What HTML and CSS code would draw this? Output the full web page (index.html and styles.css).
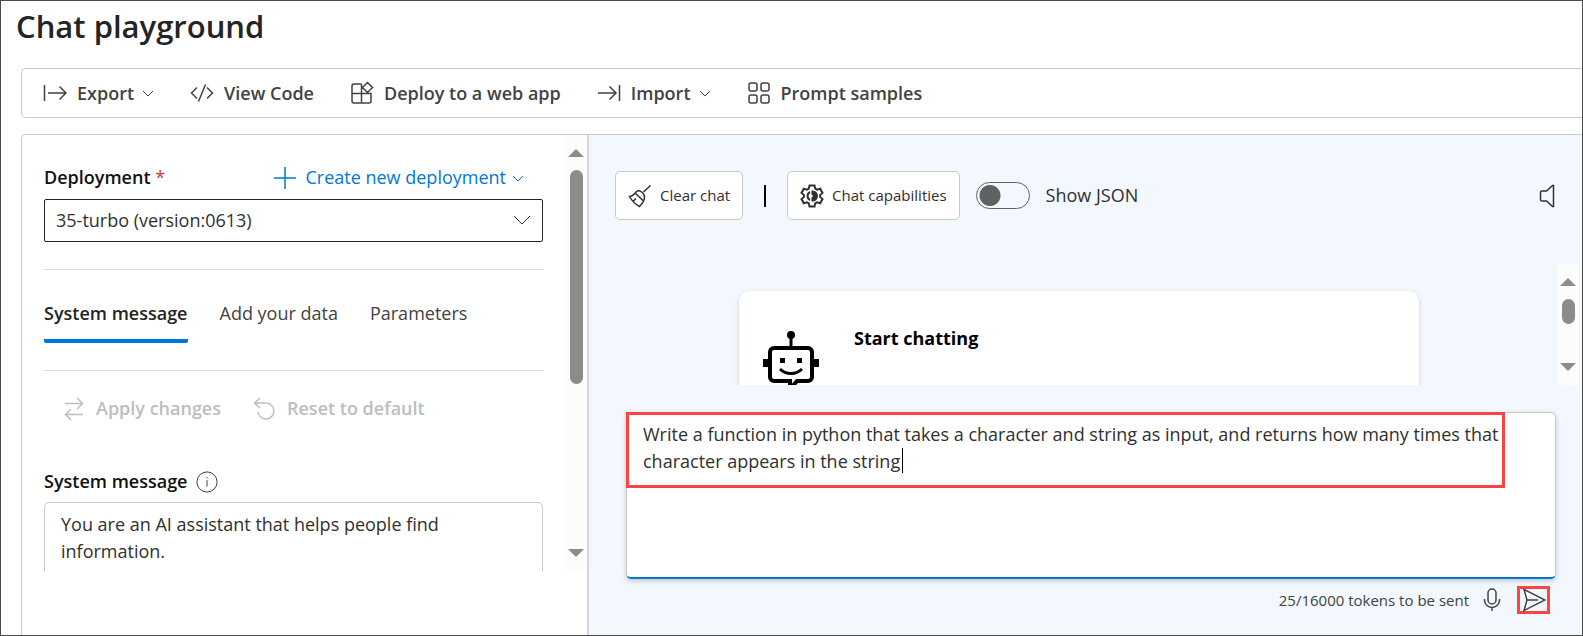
FILE: index.html
```html
<!DOCTYPE html>
<html lang="en">
<head>
<meta charset="utf-8">
<title>Chat playground</title>
<link rel="stylesheet" href="styles.css">
</head>
<body>
<div class="page">
  <h1 class="title">Chat playground</h1>

  <nav class="toolbar" aria-label="Playground actions">
    <button class="tool" type="button">
      <svg class="icon" viewBox="0 0 24 24"><path d="M1.500 4v16M5 12h18M16.500 5.500 23 12l-6.500 6.500"/></svg>
      <span>Export</span>
      <svg class="chevron" viewBox="0 0 12 12"><path d="M1 4l5 5 5-5"/></svg>
    </button>
    <button class="tool" type="button">
      <svg class="icon" viewBox="0 0 24 24"><path d="M7 6.500 1.500 12 7 17.500M17 6.500l5.500 5.500-5.500 5.500M15.500 3.500l-7 17"/></svg>
      <span>View Code</span>
    </button>
    <button class="tool" type="button">
      <svg class="icon" viewBox="0 0 24 24"><path d="M11.500 3H4a2 2 0 0 0-2 2v15a2 2 0 0 0 2 2h15a2 2 0 0 0 2-2v-7.500H2M11.500 3v19M17.500 1.500l5 5-5 5-5-5z"/></svg>
      <span>Deploy to a web app</span>
    </button>
    <button class="tool" type="button">
      <svg class="icon" viewBox="0 0 24 24"><path d="M22.500 4v16M1 12h18M12.500 5.500 19 12l-6.500 6.500"/></svg>
      <span>Import</span>
      <svg class="chevron" viewBox="0 0 12 12"><path d="M1 4l5 5 5-5"/></svg>
    </button>
    <button class="tool" type="button">
      <svg class="icon" viewBox="0 0 24 24"><rect x="2" y="2" width="8" height="8" rx="2"/><rect x="14" y="2" width="8" height="8" rx="2"/><rect x="2" y="14" width="8" height="8" rx="2"/><rect x="14" y="14" width="8" height="8" rx="2"/></svg>
      <span>Prompt samples</span>
    </button>
  </nav>

  <main class="workspace">
    <section class="setup">
      <div class="setup-scroll">
        <div class="setup-content">
          <div class="field-head">
            <label class="label" for="deployment">Deployment <span class="required">*</span></label>
            <button class="create" type="button">
              <svg class="icon" viewBox="0 0 24 24"><path d="M12 1v22M1 12h22"/></svg>
              <span>Create new deployment</span>
              <svg class="chevron" viewBox="0 0 12 12"><path d="M1 4l5 5 5-5"/></svg>
            </button>
          </div>
          <div class="select-wrap">
            <select id="deployment" class="select"><option>35-turbo (version:0613)</option></select>
            <svg class="select-arrow" viewBox="0 0 18 18"><path d="M1 5l8 8 8-8"/></svg>
          </div>
          <div class="tabs" role="tablist">
            <button class="tab tab-active" type="button" role="tab" aria-selected="true">System message</button>
            <button class="tab" type="button" role="tab">Add your data</button>
            <button class="tab" type="button" role="tab">Parameters</button>
          </div>
          <div class="actions">
            <button class="action" type="button" disabled>
              <svg class="icon" viewBox="0 0 24 24"><path d="M3 6.500h17M15 1l5.500 5.500L15 12M21 17.500H4M9 12l-5.500 5.500L9 23"/></svg>
              <span>Apply changes</span>
            </button>
            <button class="action" type="button" disabled>
              <svg class="icon" viewBox="0 0 24 24"><path d="M7 1 1.500 6 7 11M2 6h11a8 8 0 1 1-8 9"/></svg>
              <span>Reset to default</span>
            </button>
          </div>
          <div class="message-head">
            <label class="label" for="system-message">System message</label>
            <svg class="info" viewBox="0 0 24 24"><circle cx="12" cy="12" r="11"/><path d="M12 10v7M12 6.500v1.500"/></svg>
          </div>
          <textarea id="system-message" class="message">You are an AI assistant that helps people find information.</textarea>
        </div>
        <div class="scrollbar">
          <i class="arrow-up"></i><i class="thumb"></i><i class="arrow-down"></i>
        </div>
      </div>
    </section>

    <section class="chat">
      <div class="chat-bar">
        <button class="chip" type="button">
          <svg class="icon" viewBox="0 0 24 24"><path d="M22.500 1.500 15.500 8M8.500 7.500c3-2 8 1.500 8 5.500 0 4-2.500 7-5 9.500C7 20 4 17 1.500 12.500c3 0 5-2.500 7-5zM7 9l8.500 8M5 17.500l3-3"/></svg>
          <span>Clear chat</span>
        </button>
        <span class="bar-divider"></span>
        <button class="chip" type="button">
          <svg class="icon gear" viewBox="0 0 24 24"><path d="M9.500 1.500h5l.7 3.200 1.800 1 3.200-1 2.300 4.200-2.400 2.200v1.800l2.400 2.200-2.300 4.200-3.200-1-1.800 1-.7 3.200h-5l-.7-3.200-1.800-1-3.200 1-2.300-4.200 2.400-2.200v-1.800L1.500 8.900l2.300-4.200 3.200 1 1.800-1z"/><path d="M10 8a4.500 4.500 0 0 0 0 8"/><path d="M12.500 7.500a4.500 4.500 0 0 1 0 9V14l2-2-2-2z" fill="currentColor"/></svg>
          <span>Chat capabilities</span>
        </button>
        <label class="switch"><input class="switch-input" type="checkbox" role="switch"><span>Show JSON</span></label>
        <button class="speaker" type="button" aria-label="Speaker">
          <svg class="icon" viewBox="0 0 24 24"><path d="M17.500 1.500v21h-1L10.500 17H6a1.500 1.500 0 0 1-1.500-1.500v-7A1.500 1.500 0 0 1 6 7h4.500l6-5.500z"/></svg>
        </button>
      </div>

      <div class="thread">
        <div class="thread-body">
          <article class="card">
            <svg class="robot" viewBox="0 0 56 60"><g fill="none" stroke="#000" stroke-width="4"><path d="M28 5v12" stroke-width="3"/><path d="M11 17h34a4 4 0 0 1 4 4v25a4 4 0 0 1-4 4H34l-7 8v-8H11a4 4 0 0 1-4-4V21a4 4 0 0 1 4-4z"/><path d="M17 38c6 6 16 6 22 0" stroke-width="3"/></g><circle cx="28" cy="4" r="4"/><path d="M0 28h5v8H0zM51 28h5v8h-5zM17 27h5v5h-5zM34 27h5v5h-5z"/></svg>
            <h2 class="card-title">Start chatting</h2>
          </article>
        </div>
        <div class="scrollbar">
          <i class="arrow-up"></i><i class="thumb thumb-short"></i><i class="arrow-down"></i>
        </div>
      </div>

      <div class="composer">
        <textarea class="prompt" aria-label="User message">Write a function in python that takes a character and string as input, and returns how many times that character appears in the string</textarea>
        <span class="caret"></span>
        <span class="highlight"></span>
      </div>
      <div class="composer-foot">
        <span class="tokens">25/16000 tokens to be sent</span>
        <button class="mic" type="button" aria-label="Speak">
          <svg class="icon" viewBox="0 0 24 24"><rect x="8" y="1" width="8" height="15" rx="4"/><path d="M4.500 11v1a7.500 7.500 0 0 0 15 0v-1M12 19.500V23"/></svg>
        </button>
        <button class="send" type="button" aria-label="Send">
          <svg class="icon" viewBox="0 0 24 24"><path d="M2 1.500 23 12 2 22.500 5 12zM5 12h11"/></svg>
        </button>
      </div>
    </section>
  </main>
</div>
</body>
</html>
```
FILE: styles.css
```css
* { box-sizing: border-box; }
html, body { height: 100%; }
body {
  margin: 0;
  font: 18px/27px "Open Sans", "Segoe UI", sans-serif;
  color: #303030;
  background: #fff;
}
button, select, textarea { font: inherit; color: inherit; margin: 0; }
button { display: flex; align-items: center; padding: 0; border: 0; background: none; white-space: nowrap; }
svg { display: block; flex: none; fill: none; stroke: currentColor; stroke-width: 1.5; }
.icon { width: 24px; height: 24px; }
.chevron { width: 12px; height: 12px; margin-left: -2px; stroke-width: 1; }

.page {
  min-height: 100%;
  display: flex;
  flex-direction: column;
  border: 1px solid #4d4a4c;
  overflow: hidden;
}
.title { margin: 0; padding: 4px 0 0 15px; font-size: 31px; line-height: 42px; font-weight: 600; color: #242424; }

.toolbar {
  display: flex;
  align-items: center;
  gap: 36px;
  height: 50px;
  margin: 21px 0 16px 20px;
  padding-left: 21px;
  border: 1px solid #c9c9c9;
  border-right: 0;
  border-radius: 5px 0 0 5px;
  color: #424242;
}
.tool { gap: 10px; font-weight: 600; }

.workspace {
  flex: 1;
  display: flex;
  margin-left: 20px;
  border: 1px solid #c9c9c9;
  border-width: 1px 0 0 1px;
  border-radius: 5px 0 0 0;
}
.setup { flex: none; width: 567px; border-right: 2px solid #d4d6d9; }
.setup-scroll { display: flex; height: 436px; overflow: hidden; }
.setup-content { flex: 1; min-width: 0; padding: 29px 22px 0; }
.scrollbar {
  flex: none;
  width: 22px;
  display: flex;
  flex-direction: column;
  align-items: center;
  padding: 14px 0;
  background: #fcfcfc;
}
.arrow-up, .arrow-down { border: solid transparent; border-width: 0 8px; }
.arrow-up { border-bottom: 8px solid #8b8b8b; }
.arrow-down { border-top: 8px solid #8b8b8b; margin-top: auto; }
.thumb { width: 13px; height: 214px; margin-top: 13px; border-radius: 7px; background: #8b8b8b; }
.thumb-short { height: 25px; }

.field-head { display: flex; justify-content: space-between; padding-right: 19px; }
.label { font-weight: 600; color: #111; }
.required { color: #d13438; font-weight: 400; }
.create { gap: 8px; color: #0078d4; }
.select-wrap { position: relative; margin-top: 8px; }
.select {
  display: block;
  width: 100%;
  height: 43px;
  padding: 0 11px;
  border: 1px solid #242424;
  border-radius: 2px;
  background: #fff;
  appearance: none;
}
.select-arrow { position: absolute; right: 12px; top: 12px; width: 18px; height: 18px; stroke-width: 1; pointer-events: none; }
.tabs {
  display: flex;
  gap: 32px;
  margin-top: 27px;
  padding: 30px 0 27px;
  border: solid #dcdcdc;
  border-width: 1px 0;
}
.tab { padding-bottom: 12px; border-bottom: 4px solid transparent; color: #424242; }
.tab-active { font-weight: 600; color: #242424; border-bottom-color: #0078d4; border-radius: 2px; }
.actions { display: flex; gap: 32px; margin-top: 24px; padding-left: 18px; }
.action { gap: 10px; font-weight: 600; color: #bdbdbd; }
.message-head { display: flex; align-items: center; gap: 8px; margin-top: 46px; }
.info { width: 22px; height: 22px; stroke-width: 1; }
.message {
  display: block;
  width: 100%;
  height: 120px;
  margin-top: 7px;
  padding: 8px 16px;
  border: 1px solid #c9c9c9;
  border-radius: 5px;
  resize: none;
}

.chat { flex: 1; min-width: 0; background: #f3f7fe; }
.chat-bar { display: flex; align-items: center; padding: 36px 22px 0 26px; }
.chip {
  gap: 8px;
  height: 49px;
  padding: 0 12px;
  border: 1px solid #c9c9c9;
  border-radius: 5px;
  background: #fff;
  font-size: 15px;
}
.gear { stroke-width: 2; }
.bar-divider { width: 2px; height: 22px; margin: 0 21px; background: #000; }
.switch { display: flex; align-items: center; gap: 16px; margin-left: 16px; }
.switch-input {
  appearance: none;
  width: 54px;
  height: 27px;
  margin: 0;
  border: 1px solid #616161;
  border-radius: 14px;
  background: radial-gradient(circle at 13px 50%, #616161 10px, transparent 11px);
}
.speaker { margin-left: auto; }
.thread { display: flex; height: 121px; margin: 44px 3px 0 0; overflow: hidden; }
.thread-body { flex: 1; padding: 27px 138px 0 150px; }
.card {
  display: flex;
  align-items: flex-start;
  gap: 35px;
  height: 160px;
  padding: 34px 24px;
  border-radius: 11px;
  background: #fff;
  box-shadow: 0 2px 5px rgba(0, 0, 0, 0.16);
}
.robot { width: 56px; height: 60px; margin-top: 6px; fill: #000; stroke: none; }
.card-title { margin: 0; font-size: 18px; line-height: 27px; font-weight: 700; color: #000; }
.composer { position: relative; margin: 27px 26px 0 37px; }
.prompt {
  display: block;
  width: 100%;
  height: 167px;
  padding: 8px 52px 8px 16px;
  border: 1px solid #c9c9c9;
  border-bottom: 2px solid #0078d4;
  border-radius: 5px;
  resize: none;
  outline: 0;
  background: #fff;
  box-shadow: 0 2px 5px rgba(0, 0, 0, 0.2);
}
.caret { position: absolute; left: 276px; top: 36px; width: 1px; height: 25px; background: #000; }
.highlight { position: absolute; left: 0; top: 0; right: 51px; height: 76px; border: 3px solid #ff4343; }
.composer-foot { display: flex; justify-content: flex-end; align-items: center; margin: 7px 32px 0 0; color: #424242; }
.tokens { font-size: 15px; }
.mic { margin: 0 13px 0 11px; }
.send { justify-content: center; width: 33px; height: 28px; border: 3px solid #ff4343; }
```
